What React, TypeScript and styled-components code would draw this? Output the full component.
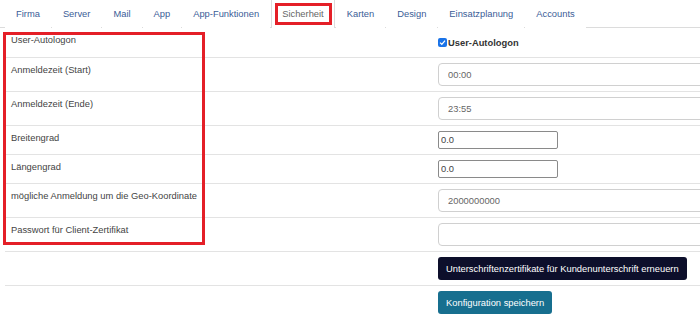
import React from 'react';
import styled, { createGlobalStyle } from 'styled-components';

const GlobalStyle = createGlobalStyle`
  body {
    margin: 0;
    background: #fff;
    font-family: "Liberation Sans", Arial, sans-serif;
    overflow: hidden;
  }
`;

const Page = styled.div`
  position: relative;
  width: 700px;
  height: 322px;
  overflow: hidden;
`;

const TabBar = styled.ul`
  display: flex;
  margin: 0;
  padding: 0 0 0 5px;
  list-style: none;
  height: 27px;
  border-bottom: 1px solid #dcdcdc;
`;

const Tab = styled.li<{ $active?: boolean }>`
  display: flex;
  align-items: center;
  box-sizing: border-box;
  height: 28px;
  margin-bottom: -1px;
  padding: 0 10px;
  margin-right: 1px;
  font-size: 9.35px;
  color: ${({ $active }) => ($active ? '#666' : '#3b5d97')};
  background: #fff;
  border-left: 1px solid ${({ $active }) => ($active ? '#dcdcdc' : 'transparent')};
  border-right: 1px solid ${({ $active }) => ($active ? '#dcdcdc' : 'transparent')};
`;

const Form = styled.div`
  margin-left: 5px;
`;

const Row = styled.div`
  display: grid;
  grid-template-columns: 428px 1fr;
  align-items: start;
  border-top: 1px solid #e3e3e3;
  &:first-child {
    border-top: none;
  }
`;

const Label = styled.div`
  padding: 5px 6px;
  font-size: 9.35px;
  line-height: 14px;
  color: #444;
`;

const Value = styled.div`
  padding: 5px 0 5px 5px;
  display: flex;
  align-items: center;
`;

const CheckLabel = styled.label`
  display: flex;
  align-items: center;
  height: 19px;
  font-size: 9.35px;
  font-weight: bold;
  color: #333;
`;

const CheckBox = styled.span`
  display: inline-flex;
  align-items: center;
  justify-content: center;
  width: 9px;
  height: 9px;
  margin: 0 1px 0 0;
  border-radius: 2px;
  background: #1a73e8;
`;

const WideInput = styled.input`
  box-sizing: border-box;
  width: 320px;
  height: 23px;
  padding: 0 9px;
  border: 1px solid #d0d0d0;
  border-radius: 4px;
  font-family: inherit;
  font-size: 9.35px;
  color: #666;
  background: #fff;
  outline: none;
`;

const SmallInput = styled.input`
  box-sizing: border-box;
  width: 120px;
  height: 18px;
  padding: 0 2px;
  border: 1px solid #8a8a8a;
  border-radius: 2px;
  font-family: inherit;
  font-size: 9.35px;
  color: #444;
  background: #fff;
  outline: none;
`;

const Button = styled.button<{ $variant: 'dark' | 'teal' }>`
  height: 23px;
  padding: 0 8px;
  border: none;
  border-radius: 3px;
  font-family: inherit;
  font-size: 9.35px;
  color: #fff;
  background: ${({ $variant }) => ($variant === 'dark' ? '#0d0f2b' : '#176f8f')};
  cursor: pointer;
`;

const Marker = styled.div<{ $x: number; $y: number; $w: number; $h: number }>`
  position: absolute;
  left: ${({ $x }) => $x}px;
  top: ${({ $y }) => $y}px;
  width: ${({ $w }) => $w}px;
  height: ${({ $h }) => $h}px;
  box-sizing: border-box;
  border: 3px solid #e41f27;
  pointer-events: none;
`;

const tabs = ['Firma', 'Server', 'Mail', 'App', 'App-Funktionen', 'Sicherheit', 'Karten', 'Design', 'Einsatzplanung', 'Accounts'];

export default function App() {
  return (
    <Page>
      <GlobalStyle />
      <TabBar>
        {tabs.map((t) => (
          <Tab key={t} $active={t === 'Sicherheit'}>{t}</Tab>
        ))}
      </TabBar>
      <Form>
        <Row>
          <Label>User-Autologon</Label>
          <Value>
            <CheckLabel>
              <CheckBox>
                <svg width="7" height="7" viewBox="0 0 10 10">
                  <path d="M1.5 5.2 L4 7.6 L8.6 2.2" fill="none" stroke="#fff" strokeWidth="1.8" />
                </svg>
              </CheckBox>
              User-Autologon
            </CheckLabel>
          </Value>
        </Row>
        <Row>
          <Label>Anmeldezeit (Start)</Label>
          <Value><WideInput defaultValue="00:00" /></Value>
        </Row>
        <Row>
          <Label>Anmeldezeit (Ende)</Label>
          <Value><WideInput defaultValue="23:55" /></Value>
        </Row>
        <Row>
          <Label>Breitengrad</Label>
          <Value><SmallInput defaultValue="0.0" /></Value>
        </Row>
        <Row>
          <Label>Längengrad</Label>
          <Value><SmallInput defaultValue="0.0" /></Value>
        </Row>
        <Row>
          <Label>mögliche Anmeldung um die Geo-Koordinate</Label>
          <Value><WideInput defaultValue="2000000000" /></Value>
        </Row>
        <Row>
          <Label>Passwort für Client-Zertifikat</Label>
          <Value><WideInput type="password" /></Value>
        </Row>
        <Row>
          <Label />
          <Value><Button $variant="dark">Unterschriftenzertifikate für Kundenunterschrift erneuern</Button></Value>
        </Row>
        <Row>
          <Label />
          <Value><Button $variant="teal">Konfiguration speichern</Button></Value>
        </Row>
      </Form>
      <Marker $x={275} $y={3} $w={57} $h={22} />
      <Marker $x={3} $y={32} $w={202} $h={213} />
    </Page>
  );
}
